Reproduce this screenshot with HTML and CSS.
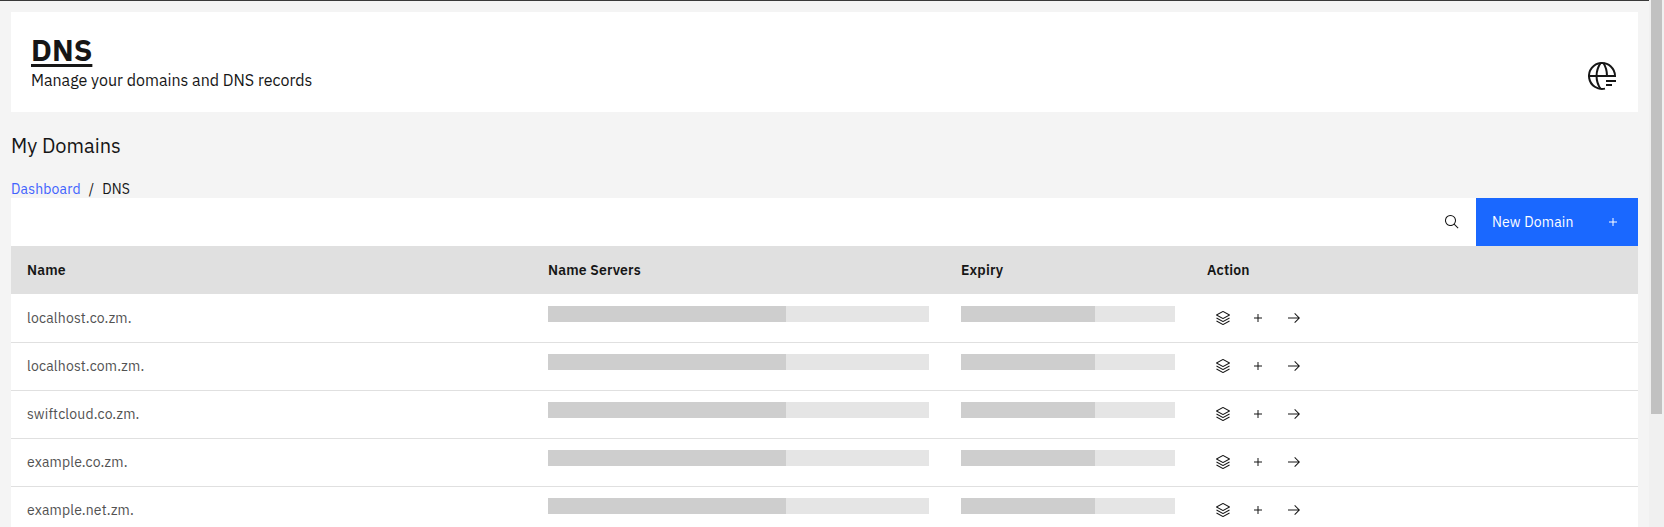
FILE: index.html
```html
<!DOCTYPE html>
<html lang="en">
<head>
<meta charset="utf-8">
<title>DNS</title>
<link rel="stylesheet" href="styles.css">
</head>
<body>
<svg class="defs" width="0" height="0">
  <symbol id="layers" viewBox="0 0 32 32"><path d="M16,24a.9967.9967,0,0,1-.4741-.12l-13-7L3.4741,15.12,16,21.8643,28.5259,15.12l.9482,1.7607-13,7A.9967.9967,0,0,1,16,24Z"/><path d="M16,30a.9967.9967,0,0,1-.4741-.12l-13-7L3.4741,21.12,16,27.8643,28.5259,21.12l.9482,1.7607-13,7A.9967.9967,0,0,1,16,30Z"/><path d="M16,18a.9967.9967,0,0,1-.4741-.12l-13-7a1,1,0,0,1,0-1.7607l13-7a.9982.9982,0,0,1,.9482,0l13,7a1,1,0,0,1,0,1.7607l-13,7A.9967.9967,0,0,1,16,18ZM5.1094,10,16,15.8643,26.8906,10,16,4.1358Z"/></symbol>
  <symbol id="add" viewBox="0 0 32 32"><path d="M17 15V8h-2v7H8v2h7v7h2v-7h7v-2z"/></symbol>
  <symbol id="arrow" viewBox="0 0 32 32"><path d="M18 6l-1.43 1.393L24.15 15H4v2h20.15l-7.58 7.573L18 26l10-10z"/></symbol>
</svg>
<div class="window">
  <main class="page">
    <header class="banner">
      <div>
        <h1 class="banner-title">DNS</h1>
        <p class="banner-text">Manage your domains and DNS records</p>
      </div>
      <svg class="globe" width="32" height="32" viewBox="0 0 32 32" fill="none" stroke="#161616" stroke-width="2">
        <path d="M19 28.65A13 13 0 1 1 29 16H2"/>
        <path d="M14.6 3C9.2 11 9.2 21 14.6 29M17.4 3C19.7 6.500 21 11 21 16"/>
        <path d="M20 21h10M20 25h6"/>
      </svg>
    </header>
    <h2 class="heading">My Domains</h2>
    <nav class="crumbs"><a class="crumb-link">Dashboard</a><span class="slash">/</span><span>DNS</span></nav>
    <section class="toolbar">
      <svg class="search" width="16" height="16" viewBox="0 0 32 32"><path d="M29,27.5859l-7.5521-7.5521a11.0177,11.0177,0,1,0-1.4141,1.4141L27.5859,29ZM4,13a9,9,0,1,1,9,9A9.01,9.01,0,0,1,4,13Z"/></svg>
      <button class="new"><span>New Domain</span><svg class="new-icon"><use href="#add"/></svg></button>
    </section>
    <div class="row head"><span>Name</span><span>Name Servers</span><span>Expiry</span><span>Action</span></div>
    <div class="row"><span class="name">localhost.co.zm.</span><i class="bar wide"></i><i class="bar short"></i><div class="actions"><svg><use href="#layers"/></svg><svg><use href="#add"/></svg><svg><use href="#arrow"/></svg></div></div>
    <div class="row"><span class="name">localhost.com.zm.</span><i class="bar wide"></i><i class="bar short"></i><div class="actions"><svg><use href="#layers"/></svg><svg><use href="#add"/></svg><svg><use href="#arrow"/></svg></div></div>
    <div class="row"><span class="name">swiftcloud.co.zm.</span><i class="bar wide"></i><i class="bar short"></i><div class="actions"><svg><use href="#layers"/></svg><svg><use href="#add"/></svg><svg><use href="#arrow"/></svg></div></div>
    <div class="row"><span class="name">example.co.zm.</span><i class="bar wide"></i><i class="bar short"></i><div class="actions"><svg><use href="#layers"/></svg><svg><use href="#add"/></svg><svg><use href="#arrow"/></svg></div></div>
    <div class="row"><span class="name">example.net.zm.</span><i class="bar wide"></i><i class="bar short"></i><div class="actions"><svg><use href="#layers"/></svg><svg><use href="#add"/></svg><svg><use href="#arrow"/></svg></div></div>
  </main>
  <div class="track"><div class="thumb"></div></div>
</div>
</body>
</html>
```
FILE: styles.css
```css
* { box-sizing: border-box; }
body { margin: 0; height: 527px; overflow: hidden; background: #f4f4f4; color: #161616; font-family: "IBM Plex Sans", Roboto, "Liberation Sans", sans-serif; font-size: 14px; }
h1, h2, p { margin: 0; }
.defs { display: block; }
.window { display: flex; height: 527px; overflow: hidden; }
.page { width: 1649px; padding: 11px 11px 0; border-top: 1px solid #393939; }
.banner { display: flex; justify-content: space-between; height: 100px; padding: 21px 20px 0; background: #fff; }
.banner-title { margin-bottom: 1px; font-size: 30px; line-height: 34px; font-weight: 700; text-decoration: underline; text-decoration-thickness: 3px; text-underline-offset: 3px; }
.banner-text { font-size: 16px; line-height: 24px; }
.globe { margin-top: 27px; }
.heading { margin: 20px 0 0; font-size: 20px; line-height: 28px; font-weight: 400; }
.crumbs { display: flex; margin: 19px 0 0; height: 19px; line-height: 20px; letter-spacing: .16px; }
.crumb-link { color: #4062fe; }
.slash { margin: 0 8px; }
.toolbar { display: flex; justify-content: flex-end; align-items: center; height: 48px; background: #fff; }
.search { margin-right: 16px; fill: #161616; }
.new { display: flex; justify-content: space-between; align-items: center; width: 162px; height: 48px; padding: 0 17px 0 16px; border: 0; background: #1a68ff; color: #fff; font: inherit; letter-spacing: .16px; }
.new-icon { width: 16px; height: 16px; fill: #fff; }
.row { display: grid; grid-template-columns: 521px 413px 246px 1fr; align-items: center; height: 48px; padding: 0 0 1px 16px; background: #fff; border-top: 1px solid #e0e0e0; letter-spacing: .16px; }
.head { background: #e0e0e0; font-weight: 600; }
.head + .row { border-top-color: #fff; }
.name { color: #525252; }
.bar { height: 16px; align-self: start; margin-top: 11px; background: linear-gradient(90deg, #cecece 62.5%, #e5e5e5 62.5%); }
.wide { width: 381px; }
.short { width: 214px; }
.actions { display: flex; padding-left: 8px; }
.actions svg { width: 16px; height: 16px; margin-right: 19px; fill: #161616; }
.actions svg:nth-child(2) { margin-right: 20px; }
.track { width: 15px; padding: 0 2px; background: #f0f0f0; }
.thumb { height: 414px; background: #c1c1c1; }
```
